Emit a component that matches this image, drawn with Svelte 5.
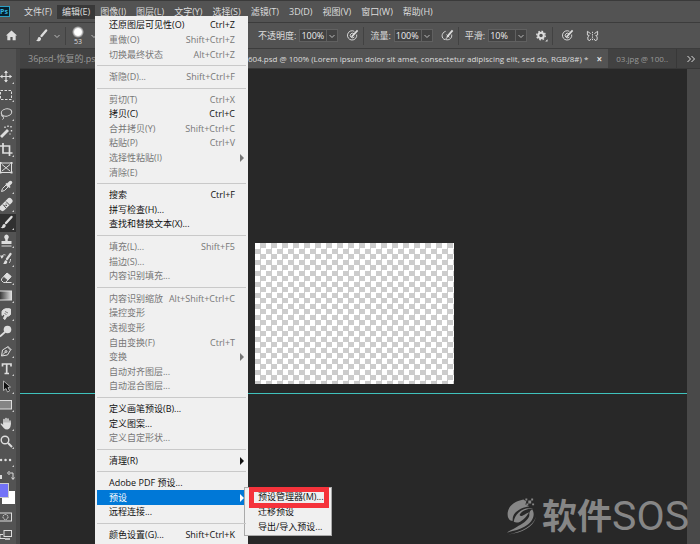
<script>
  const menus = ['文件(F)', '编辑(E)', '图像(I)', '图层(L)', '文字(Y)', '选择(S)', '滤镜(T)', '3D(D)', '视图(V)', '窗口(W)', '帮助(H)']

  const editMenu = [
    { label: '还原图层可见性(O)', keys: 'Ctrl+Z' },
    { label: '重做(O)', keys: 'Shift+Ctrl+Z', off: true },
    { label: '切换最终状态', keys: 'Alt+Ctrl+Z', off: true },
    null,
    { label: '渐隐(D)...', keys: 'Shift+Ctrl+F', off: true },
    null,
    { label: '剪切(T)', keys: 'Ctrl+X', off: true },
    { label: '拷贝(C)', keys: 'Ctrl+C' },
    { label: '合并拷贝(Y)', keys: 'Shift+Ctrl+C', off: true },
    { label: '粘贴(P)', keys: 'Ctrl+V', off: true },
    { label: '选择性粘贴(I)', more: true, off: true },
    { label: '清除(E)', off: true },
    null,
    { label: '搜索', keys: 'Ctrl+F' },
    { label: '拼写检查(H)...' },
    { label: '查找和替换文本(X)...' },
    null,
    { label: '填充(L)...', keys: 'Shift+F5', off: true },
    { label: '描边(S)...', off: true },
    { label: '内容识别填充...', off: true },
    null,
    { label: '内容识别缩放', keys: 'Alt+Shift+Ctrl+C', off: true },
    { label: '操控变形', off: true },
    { label: '透视变形', off: true },
    { label: '自由变换(F)', keys: 'Ctrl+T', off: true },
    { label: '变换', more: true, off: true },
    { label: '自动对齐图层...', off: true },
    { label: '自动混合图层...', off: true },
    null,
    { label: '定义画笔预设(B)...' },
    { label: '定义图案...' },
    { label: '定义自定形状...', off: true },
    null,
    { label: '清理(R)', more: true },
    null,
    { label: 'Adobe PDF 预设...' },
    { label: '预设', more: true, sub: ['预设管理器(M)...', '迁移预设', '导出/导入预设...'] },
    { label: '远程连接...' },
    null,
    { label: '颜色设置(G)...', keys: 'Shift+Ctrl+K' }
  ]

  // 16x16 drawings, the left edge of the bar cuts some of them
  const tools = [
    { name: '移动', art: '<path d="M6 2v11M0.500 7.500h11" stroke-width="1.200"/><path d="M6 1.500l-2 2.500h4zM6 13.500l-2-2.500h4zM0 7.500l2.500-2v4zM12 7.500l-2.500-2v4z" fill="currentColor" stroke="none"/>' },
    { name: '矩形选框', art: '<rect x="0.500" y="3.500" width="11" height="9" stroke-dasharray="2.500 1.500"/>' },
    { name: '套索', art: '<ellipse cx="6.500" cy="6.500" rx="5.300" ry="3.700" transform="rotate(-12 6.500 6.500)"/><path d="M2 9c-1 1 .5 2.200 1.500 1.200M3 10.500c1 1 .5 2.500-.5 3"/>' },
    { name: '魔棒', art: '<path d="M1 13l7-7" stroke-width="2.800"/><path d="M5 2.500v1.500M8 1.500v1.500M11 2v1.500M11.500 6v1.500M10 9.500v1" stroke-width="1.400"/>' },
    { name: '裁剪', art: '<path d="M3 1v10h9.500M0 4h9.500v10" stroke-width="1.700"/>' },
    { name: '图框', art: '<rect x="0.500" y="3" width="11" height="9.500"/><path d="M2 4.500l8 6.500M10 4.500l-8 6.500"/><path d="M0 3h1.500M10.500 3h2M0 12.500h1.500M10.500 12.500h2" stroke-width="2"/>', solo: true },
    { name: '吸管', art: '<path d="M1.500 12.500l1-3 4-4 2 2-4 4z"/><path d="M6 4.500l4 4" stroke-width="1.700"/><path d="M8 6l2.500-2.500" stroke-width="3.500" stroke-linecap="round"/>' },
    { name: '修复画笔', art: '<path d="M2.500 11l7-7" stroke-width="6" stroke-linecap="round"/><path d="M3 7.500l3 3.500M6 4.500l3.500 3.500" stroke="#505050"/><path d="M5.500 7h1M6 8.500h1M4.500 8.500h1" stroke="#505050"/>' },
    { name: '画笔', art: '<path d="M11.500 2L6 8" stroke-width="2.400" stroke-linecap="round"/><path d="M0.500 12.500c2 0 1.500-1.500 2.500-3s3.500 0 2.500 2-3.500 2-5 1z" fill="currentColor" stroke="none"/>', active: true },
    { name: '仿制图章', art: '<path d="M6.500 1.500a2.500 2.500 0 0 1 1.800 4c-.6.800-.8 1.500-.5 2.500h3.700v3H1.500V8h3.700c.3-1 .1-1.700-.5-2.500a2.500 2.500 0 0 1 1.800-4z" fill="currentColor" stroke="none"/><path d="M1.500 13h10"/>' },
    { name: '历史记录画笔', art: '<path d="M10.500 3L7 8" stroke-width="2.200" stroke-linecap="round"/><path d="M3 12.500c1 0 1-1.500 1.800-2.700s3 0 2.400 1.700-2.700 2-4.200 1z" fill="currentColor" stroke="none"/><path d="M5.500 4C3 3 1.500 5 1.500 7M10.500 8c0 2-.5 3-1.500 4" /><path d="M0 4.500l4 .2-2.200 3z" fill="currentColor" stroke="none"/>' },
    { name: '橡皮擦', art: '<path d="M1.500 9l5.500-6 4 3.500-5.500 6h-2L1.500 10.500z"/><path d="M4 6.500L7 3l4 3.500L8 10z" fill="currentColor"/><path d="M5.500 12.500h6"/>' },
    { name: '渐变', art: '<defs><linearGradient id="ramp"><stop offset="0" stop-color="#333"/><stop offset="1" stop-color="#ddd"/></linearGradient></defs><rect x="-.5" y="3" width="12" height="9" fill="url(#ramp)"/>' },
    { name: '涂抹', art: '<path d="M2 9.500V5.500C3 3 6 2 10.500 3v5.500C9.500 10 8 10.500 7 10l-2 3.500-1.500-1L5 9 4 8z" fill="currentColor"/><path d="M5 5.500l3 1.500M4.500 7.500l2 1" stroke="#505050" stroke-width=".7"/>' },
    { name: '减淡', art: '<circle cx="7.500" cy="5.500" r="3.800" fill="currentColor" stroke="none"/><path d="M5 8L0 12.500" stroke-width="1.700"/>' },
    { name: '钢笔', art: '<path d="M1.500 13l1-6 5-3 3 3-3 5zM1.500 13L6 8.500M7.500 3l4 4"/><circle cx="6" cy="8.500" r="1"/>' },
    { name: '文字', art: '<path d="M2.500 5.500V3h8.500v2.500M6.700 3v9.500M4.500 12.500h4.500" stroke-width="1.700"/>' },
    { name: '路径选择', art: '<path d="M3.500 2v9.500L6 9.500 7.500 13l2-1L8 8.500l2.500-.5z" fill="#111" stroke="#ccc" stroke-width=".8"/>' },
    { name: '矩形', art: '<rect x="-.5" y="3.500" width="12" height="8.500" fill="#858585"/>' },
    { name: '抓手', art: '<path d="M4 8V3.500M6 7V2.500M8 7V3M10 8V5" stroke-width="1.500" stroke-linecap="round"/><path d="M3.200 6.500h7.500c.5 3-.5 7-3.500 7-3 0-4-2-6.700-5.500.5-.8 1.500-.3 2.700 1z" fill="currentColor" stroke="none"/>' },
    { name: '缩放', art: '<circle cx="5" cy="6" r="3.800" stroke-width="1.400"/><path d="M8 9l4 4" stroke-width="2"/>' },
    { name: '编辑工具栏', art: '<path d="M1 8h.1M5.500 8h.1M10 8h.1" stroke-width="2.400" stroke-linecap="round"/>' }
  ]

  let opacity = $state('100%')
  let flow = $state('100%')
  let smooth = $state('10%')
</script>

{#snippet chevron()}
  <svg class="chevron" viewBox="0 0 8 8"><path d="M1.500 3L4 5.500 6.500 3" /></svg>
{/snippet}

{#snippet pressure()}
  <svg class="icon" viewBox="0 0 14 14">
    <path d="M9 2.500A5 5 0 1 0 11.500 6M8.500 5A2.500 2.500 0 1 0 9 8.500" />
    <path d="M6 8.500L12.500 1.500" stroke-width="1.800" />
  </svg>
{/snippet}

<div class="app">
  <nav class="menubar">
    <span class="logo">Ps</span>
    {#each menus as menu, i}
      <button class:open={i === 1}>{menu}</button>
    {/each}
  </nav>

  <div class="options">
    <div class="preset">
      <button class="home" aria-label="主页">
        <svg class="icon" viewBox="0 0 14 14"><path d="M7 1.500L1 7h1.500v5h3.300V8.500h2.400V12h3.300V7H13z" fill="currentColor" stroke="none" /></svg>
      </button>
      <i class="bar"></i>
      <button class="brush" aria-label="画笔预设">
        <svg class="icon" viewBox="0 0 14 14">
          <path d="M12 1.500L7 7.500" stroke-width="2.500" stroke-linecap="round" />
          <path d="M1 12.500c2 0 1.500-2 2.500-3.300s3.800.3 2.800 2.300-3.600 2.200-5.300 1z" fill="currentColor" stroke="none" />
        </svg>
        {@render chevron()}
      </button>
      <i class="bar"></i>
      <button class="tip"><i class="dot"></i><span>53</span></button>
      {@render chevron()}
    </div>

    <label for="opacity">不透明度:</label>
    <div class="field"><input id="opacity" bind:value={opacity} /><button aria-label="不透明度选项">{@render chevron()}</button></div>
    <button class="action" aria-label="不透明度压力">{@render pressure()}</button>
    <i class="bar"></i>
    <label for="flow">流量:</label>
    <div class="field"><input id="flow" bind:value={flow} /><button aria-label="流量选项">{@render chevron()}</button></div>
    <button class="action" aria-label="喷枪">
      <svg class="icon" viewBox="0 0 14 14">
        <path d="M5 2.500C0 4 0 10.500 4.500 11.500L7 8.500" />
        <path d="M5.500 11.500c4 .5 6.500-1.500 6-5.500" />
        <path d="M6.500 8.500L12.500 1.500" stroke-width="2" /><path d="M6 6l3 3" />
      </svg>
    </button>
    <i class="bar"></i>
    <label for="smooth">平滑:</label>
    <div class="field"><input id="smooth" bind:value={smooth} /><button aria-label="平滑选项">{@render chevron()}</button></div>
    <button class="action" aria-label="平滑设置">
      <svg class="icon" viewBox="0 0 14 14">
        <circle cx="6.500" cy="7" r="3" stroke-width="2.200" />
        <circle cx="6.500" cy="7" r="4.600" stroke-width="1.500" stroke-dasharray="1.800 1.800" />
        <path d="M11 13.500h2.500V11z" fill="currentColor" stroke="none" />
      </svg>
    </button>
    <i class="bar"></i>
    <button class="action" aria-label="大小压力">{@render pressure()}</button>
    <button class="action" aria-label="对称">
      <svg class="icon" viewBox="0 0 14 14">
        <path d="M5 5L1.500 2.500v4L3.500 7l-1.500 1.500v3l2 1 1.500-2M9 5l3.500-2.500v4L10.500 7l1.500 1.500v3l-2 1-1.500-2" />
        <path d="M7 3v10" stroke-dasharray="1.500 1" />
      </svg>
    </button>
  </div>

  <div class="work">
    <aside class="toolbar">
      <div class="tools">
        {#each tools as tool}
          <button class:active={tool.active} class:solo={tool.solo} aria-label={tool.name}>
            <svg class="tool" viewBox="0 0 16 16">{@html tool.art}</svg>
          </button>
        {/each}
      </div>
      <div class="swatches">
        <svg class="swap" viewBox="0 0 16 14"><path d="M0 6h2v4H0z" fill="currentColor" stroke="none" /><path d="M9 4h4v6M9.500 2L7.500 4l2 2M11.500 8.500L13 10.500l1.500-2" /></svg>
        <button class="back" aria-label="背景色"></button>
        <button class="fore" aria-label="前景色"></button>
      </div>
      <button class="mode" aria-label="快速蒙版">
        <svg class="tool" viewBox="0 0 16 16"><rect x="-.5" y="4" width="12" height="8" /><circle cx="5.500" cy="8" r="2.500" stroke-dasharray="1.500 .6" /></svg>
      </button>
      <button class="mode" aria-label="屏幕模式">
        <svg class="tool" viewBox="0 0 16 16"><path d="M3 7.500H0v4h5" /><rect x="4" y="3.500" width="7.500" height="6" /><path d="M5 12h5" stroke-width="1.500" /></svg>
      </button>
    </aside>

    <main>
      <div class="tabs">
        <button class="tab first">36psd-恢复的.psd</button>
        <button class="tab current"><span>604.psd @ 100% (Lorem ipsum dolor sit amet, consectetur adipiscing elit, sed do, RGB/8#) *</span><b>×</b></button>
        <button class="tab last">03.jpg @ 100..</button>
        <button class="overflow" aria-label="更多标签">
          <svg viewBox="0 0 10 8"><path d="M1.500 1L4.500 4l-3 3M5.500 1l3 3-3 3" /></svg>
        </button>
      </div>
      <div class="stage">
        <div class="document"></div>
        <i class="guide"></i>
        <div class="watermark">
          <svg viewBox="0 0 32 38">
            <path d="M18 2C7 4 0 11 2 20c1 3 3 4 5 4C6 17 12 11 24 9l-4-2 1-3z" />
            <path d="M8 25C9 16 19 9 28 11c-7 0-13 4-14 7 2 3 6-2 10-3-4 6-10 13-16 10z" />
            <path d="M27 12c4 6 0 14-8 18-5 3-11 4-18 6 4-3 8-4 12-7 6-3 12-8 11-12 0-2 1-4 3-5z" />
            <path d="M31 20C27 30 16 35 3 38c13-2 25-7 28-18z" />
            <path d="M20 1h2v2h-2zM23 3h3v3h-3zM21 6h2v2h-2zM26 1h2v2h-2zM27 6h2v2h-2z" />
          </svg>
          <span>软件</span><em>SOS</em>
        </div>
      </div>
    </main>
    <div class="scroll"></div>
  </div>

  <ul class="dropdown" role="menu">
    {#each editMenu as item}
      {#if item}
        <li role="none" class:selected={item.sub}>
          <button role="menuitem" disabled={item.off}>
            <span>{item.label}</span>
            {#if item.keys}<kbd>{item.keys}</kbd>{/if}
            {#if item.more}<i class="arrow"></i>{/if}
          </button>
          {#if item.sub}
            <ul class="submenu" role="menu">
              {#each item.sub as entry, i}
                <li role="none"><button role="menuitem" class:marked={i === 0}>{entry}</button></li>
              {/each}
            </ul>
          {/if}
        </li>
      {:else}
        <li class="line" role="separator"></li>
      {/if}
    {/each}
  </ul>
</div>

<style>
  :global(body) {
    margin: 0;
    background: #282828;
  }

  .app {
    position: relative;
    display: flex;
    flex-direction: column;
    height: 100vh;
    min-height: 540px;
    overflow: hidden;
    color: #ddd;
    font: 9px/14px "Open Sans", "Noto Sans CJK SC", sans-serif;
  }

  button, input {
    margin: 0;
    padding: 0;
    border: 0;
    background: none;
    color: inherit;
    font: inherit;
    white-space: nowrap;
  }

  ul {
    margin: 0;
    padding: 0;
    list-style: none;
  }

  svg {
    display: block;
    flex: none;
    fill: none;
    stroke: currentColor;
  }

  .menubar {
    display: flex;
    align-items: center;
    box-sizing: border-box;
    height: 22px;
    border-top: 1px solid #3a3a3a;
    background: #535353;
  }

  .menubar button {
    padding: 0 5px;
  }

  .menubar .open {
    background: #383838;
  }

  .logo {
    width: 9px;
    margin-right: 9px;
    border: 1px solid #2a9fc4;
    border-left: 0;
    background: #06202e;
    color: #35b5e0;
    font-size: 7px;
    font-weight: bold;
    line-height: 9px;
  }

  .options {
    display: flex;
    align-items: center;
    box-sizing: border-box;
    height: 27px;
    border-top: 1px solid #3c3c3c;
    border-bottom: 1px solid #3c3c3c;
    background: #535353;
  }

  .preset {
    display: flex;
    align-items: center;
    width: 258px;
  }

  .home {
    margin: 0 11px 0 5px;
  }

  .brush {
    display: flex;
    align-items: center;
    gap: 5px;
    margin: 0 4px 0 5px;
  }

  .icon {
    width: 13px;
    height: 13px;
  }

  .chevron {
    width: 8px;
    height: 8px;
    color: #bbb;
  }

  .bar {
    width: 1px;
    height: 18px;
    background: #424242;
  }

  .tip {
    display: flex;
    flex-direction: column;
    align-items: center;
    width: 24px;
    font-size: 7px;
    line-height: 8px;
  }

  .dot {
    width: 12px;
    height: 12px;
    border-radius: 50%;
    background: radial-gradient(#fff 40%, #53535300 72%);
  }

  .field {
    display: flex;
    margin-left: 3px;
    border: 1px solid #606060;
    background: #424242;
  }

  .field input {
    width: 25px;
    height: 11px;
    padding-left: 1px;
    color: #eee;
  }

  .field button {
    padding: 0 1px;
    border-left: 1px solid #606060;
  }

  .action {
    margin: 0 4px 0 8px;
  }

  .options label {
    margin-left: 6px;
  }

  .options .preset + label {
    margin-left: 0;
  }

  .work {
    display: flex;
    flex: 1;
    min-height: 0;
  }

  .toolbar {
    display: flex;
    flex-direction: column;
    box-sizing: border-box;
    width: 20px;
    padding-top: 19px;
    border-right: 4px solid #474747;
    background: #535353;
  }

  .tools {
    display: flex;
    flex: 1;
    flex-direction: column;
  }

  .tools button, .mode {
    position: relative;
    display: flex;
    flex: 1;
    align-items: center;
  }

  .tools button::after {
    content: "";
    position: absolute;
    right: 2px;
    bottom: 2px;
    border: 1px solid #ccc;
    border-top-color: transparent;
    border-left-color: transparent;
  }

  .tools .solo::after {
    display: none;
  }

  .tools .active {
    background: #303030;
  }

  .tool {
    width: 16px;
    height: 16px;
  }

  .swatches {
    position: relative;
    height: 39px;
  }

  .swap {
    width: 16px;
    height: 14px;
  }

  .fore, .back {
    position: absolute;
    width: 13px;
    height: 13px;
  }

  .fore {
    top: 15px;
    left: -5px;
    outline: 1px solid #ccc;
    background: #7373f8;
  }

  .back {
    top: 22px;
    left: 2px;
    background: #fff;
  }

  .mode {
    flex: none;
    height: 18px;
  }

  main {
    display: flex;
    flex: 1;
    flex-direction: column;
    min-width: 0;
    margin-right: -13px;
  }

  .tabs {
    display: flex;
    box-sizing: border-box;
    height: 20px;
    border-bottom: 1px solid #383838;
    background: #424242;
  }

  .tab {
    color: #999;
    text-align: left;
  }

  .first {
    width: 222px;
    padding-left: 8px;
  }

  .current {
    display: flex;
    flex: 1;
    align-items: center;
    justify-content: space-between;
    min-width: 0;
    padding: 0 6px;
    background: #535353;
    color: #ddd;
    font-size: 8px;
  }

  .current b {
    font-size: 10px;
  }

  .last {
    padding: 0 8px;
    font-size: 8px;
  }

  .overflow {
    padding: 0 4px 0 9px;
    border-left: 1px solid #383838;
  }

  .overflow svg {
    width: 10px;
    height: 8px;
  }

  .stage {
    position: relative;
    flex: 1;
    margin-right: 13px;
    background: #282828;
  }

  .document {
    position: absolute;
    top: 174px;
    left: 235px;
    width: 199px;
    height: 141px;
    background: repeating-conic-gradient(#ccc 0 25%, #fff 0 50%) 0 0 / 11px 11px;
  }

  .guide {
    position: absolute;
    top: 324px;
    right: 0;
    left: 0;
    height: 1px;
    background: #3fc2bd;
  }

  .watermark {
    position: absolute;
    right: -2px;
    bottom: 4px;
    z-index: 1;
    display: flex;
    align-items: center;
    color: #868686;
    line-height: 48px;
  }

  .watermark svg {
    width: 31px;
    height: 38px;
    margin-right: 5px;
    fill: currentColor;
    stroke: none;
  }

  .watermark span {
    font-size: 35px;
    font-weight: 700;
  }

  .watermark em {
    font: 41px/48px Roboto, sans-serif;
  }

  .scroll {
    width: 13px;
    margin-top: 20px;
    background: #494949;
  }

  .dropdown {
    position: absolute;
    top: 16px;
    bottom: 0;
    left: 95px;
    z-index: 2;
    display: flex;
    flex-direction: column;
    box-sizing: border-box;
    width: 153px;
    padding: 2px;
    background: #f0f0f0;
    color: #111;
  }

  .dropdown > li {
    position: relative;
    display: flex;
    flex: 15 1 0;
    min-height: 0;
  }

  .dropdown > .line {
    flex: 8 1 0;
    align-items: center;
  }

  .line::before {
    content: "";
    width: 100%;
    height: 1px;
    background: #c9c9c9;
  }

  .dropdown > li > button {
    display: flex;
    flex: 1;
    align-items: center;
    justify-content: space-between;
    padding: 0 11px 0 12px;
  }

  .dropdown button:disabled {
    color: #777;
  }

  .dropdown > .selected {
    background: #0078d7;
    color: #fff;
  }

  kbd {
    font: inherit;
  }

  .arrow {
    position: absolute;
    right: 2px;
    border: 4px solid transparent;
    border-right: 0;
    border-left-color: currentColor;
  }

  .submenu {
    position: absolute;
    top: -3px;
    left: 147px;
    width: 86px;
    padding: 1px 0;
    border: 1px solid #aaa;
    background: #f0f0f0;
    color: #111;
  }

  .submenu li {
    display: flex;
    align-items: center;
    height: 15px;
    padding-left: 13px;
  }

  .marked {
    position: relative;
  }

  .marked::after {
    content: "";
    position: absolute;
    top: -3px;
    left: -9px;
    width: 70px;
    height: 11px;
    border: 5px solid #f5333b;
  }
</style>
